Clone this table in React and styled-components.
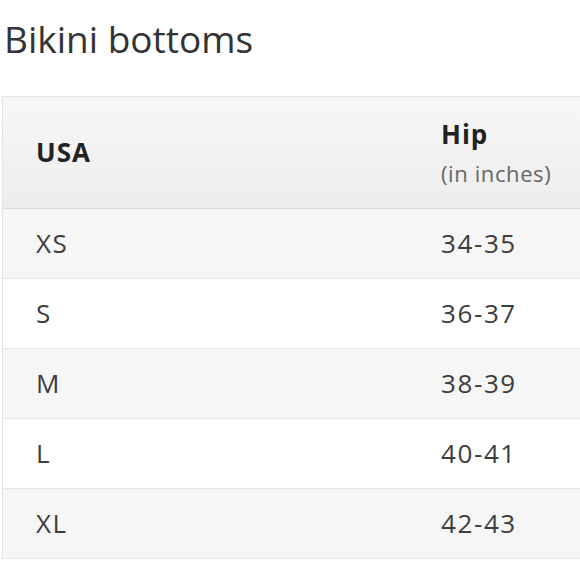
import React from "react";
import styled, { createGlobalStyle } from "styled-components";

const GlobalStyle = createGlobalStyle`
  body {
    margin: 0;
    background: #fff;
    font-family: "Open Sans", "Liberation Sans", sans-serif;
    color: #333;
    overflow: hidden;
  }
`;

const Page = styled.div`
  width: 580px;
  height: 580px;
  overflow: hidden;
`;

const Title = styled.h1`
  margin: 17px 0 0 4px;
  font-size: 37px;
  font-weight: 400;
  line-height: 44px;
  color: #333;
`;

const Table = styled.div`
  margin: 35px 0 0 2px;
  width: 600px;
  border-left: 1px solid #e3e3e3;
  border-top: 1px solid #e6e6e6;
`;

const Row = styled.div`
  display: grid;
  grid-template-columns: 405px 1fr;
  height: ${(p) => (p.$head ? "111px" : "69px")};
  align-items: center;
  border-bottom: 1px solid ${(p) => (p.$head ? "#dcdcdc" : "#e6e6e6")};
  background: ${(p) =>
    p.$head
      ? "linear-gradient(to bottom, #f7f7f7, #ededed)"
      : p.$shade
      ? "#f6f6f6"
      : "#fff"};
`;

const Cell = styled.div`
  padding-left: 33px;
  font-size: 26px;
  letter-spacing: ${(p) => (p.$bold ? "1px" : "1.6px")};
  font-weight: ${(p) => (p.$bold ? 700 : 400)};
  color: ${(p) => (p.$bold ? "#222" : "#3d3d3d")};
  line-height: 1.25;
`;

const Note = styled.div`
  font-size: 22px;
  font-weight: 400;
  letter-spacing: 0.6px;
  color: #666;
  margin-top: 9px;
`;

const sizes = [
  ["XS", "34-35"],
  ["S", "36-37"],
  ["M", "38-39"],
  ["L", "40-41"],
  ["XL", "42-43"],
];

export default function App() {
  return (
    <Page>
      <GlobalStyle />
      <Title>Bikini bottoms</Title>
      <Table>
        <Row $head>
          <Cell $bold>USA</Cell>
          <Cell $bold>
            Hip
            <Note>(in inches)</Note>
          </Cell>
        </Row>
        {sizes.map(([size, hip], i) => (
          <Row key={size} $shade={i % 2 === 0}>
            <Cell>{size}</Cell>
            <Cell>{hip}</Cell>
          </Row>
        ))}
      </Table>
    </Page>
  );
}
